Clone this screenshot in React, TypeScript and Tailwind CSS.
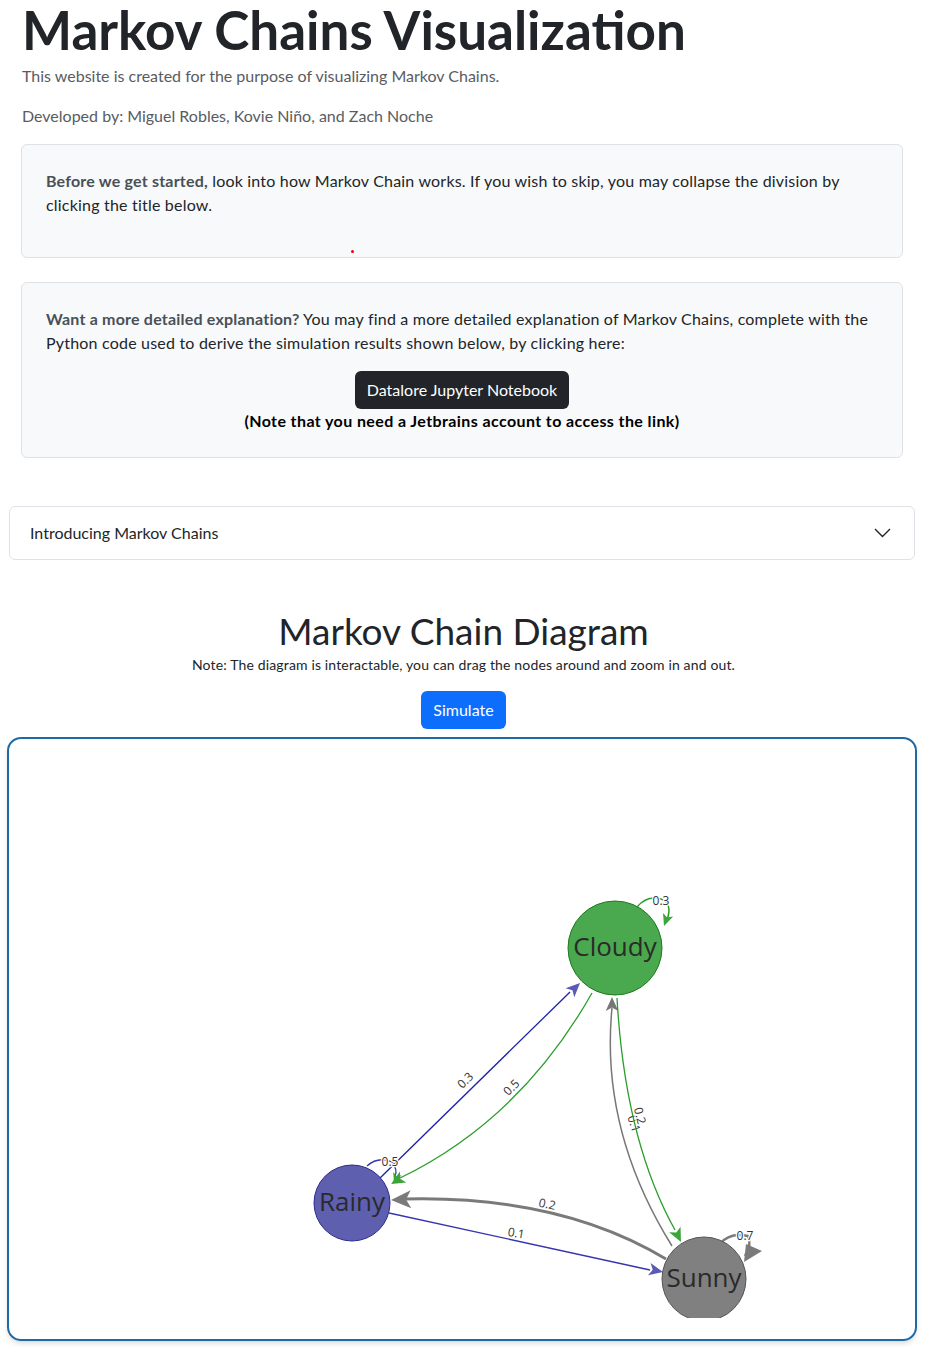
const font = { fontFamily: 'Lato, "Open Sans", sans-serif' };

function Arrow({ x, y, angle, color, size = 14 }: { x: number; y: number; angle: number; color: string; size?: number }) {
  // tip at (x, y), pointing along angle (degrees)
  const w = size * 0.45;
  return (
    <polygon
      points={`0,0 ${-size},${-w} ${-size * 0.75},0 ${-size},${w}`}
      fill={color}
      transform={`translate(${x} ${y}) rotate(${angle})`}
    />
  );
}

function Label({ x, y, angle = 0, text }: { x: number; y: number; angle?: number; text: string }) {
  return (
    <text
      x={0}
      y={0}
      transform={`translate(${x} ${y}) rotate(${angle})`}
      textAnchor="middle"
      dominantBaseline="middle"
      fontSize="12"
      fill="#333"
      stroke="#fff"
      strokeWidth="2.5"
      paintOrder="stroke"
      fontFamily='"Open Sans", sans-serif'
    >
      {text}
    </text>
  );
}

function Diagram() {
  return (
    <svg viewBox="9 739 906 579" className="block w-full h-[579px]">
      {/* Rainy -> Cloudy */}
      <line x1="378" y1="1180" x2="570" y2="992" stroke="#2020a8" strokeWidth="1.3" />
      <Arrow x={580} y={983} angle={-44} color="#5b5bb5" />
      <Label x={466} y={1081} angle={-44} text="0.3" />

      {/* Cloudy -> Rainy */}
      <path d="M592 993 Q 520 1120 400 1178" fill="none" stroke="#2a9d2a" strokeWidth="1.3" />
      <Arrow x={391} y={1184} angle={150} color="#3aa53a" />
      <Label x={512} y={1088} angle={-45} text="0.5" />

      {/* Sunny -> Cloudy */}
      <path d="M672 1246 Q 600 1130 612 1008" fill="none" stroke="#777" strokeWidth="1.5" />
      <Arrow x={612} y={997} angle={-90} color="#777" />
      <Label x={633} y={1124} angle={72} text="0.1" />

      {/* Cloudy -> Sunny */}
      <path d="M617 998 Q 625 1140 675 1230" fill="none" stroke="#2a9d2a" strokeWidth="1.3" />
      <Arrow x={681} y={1242} angle={64} color="#3aa53a" />
      <Label x={639} y={1116} angle={76} text="0.2" />

      {/* Sunny -> Rainy */}
      <path d="M666 1259 Q 560 1195 404 1199" fill="none" stroke="#7a7a7a" strokeWidth="3" />
      <Arrow x={391} y={1200} angle={178} color="#7a7a7a" size={20} />
      <Label x={547} y={1205} angle={12} text="0.2" />

      {/* Rainy -> Sunny */}
      <line x1="389" y1="1213" x2="650" y2="1270" stroke="#3535b0" strokeWidth="1.3" />
      <Arrow x={663} y={1272} angle={12} color="#5b5bb5" />
      <Label x={516} y={1234} angle={10} text="0.1" />

      {/* self loops */}
      <path d="M637 907 Q 648 894 664 900 Q 672 906 667 920" fill="none" stroke="#2a9d2a" strokeWidth="1.5" />
      <Arrow x={664} y={926} angle={110} color="#3aa53a" size={12} />
      <Label x={661} y={902} text="0.3" />

      <path d="M367 1166 Q 378 1156 392 1162 Q 398 1170 395 1176" fill="none" stroke="#3535b0" strokeWidth="1.3" />
      <Arrow x={394} y={1183} angle={110} color="#3aa53a" size={10} />
      <Label x={390} y={1163} text="0.5" />

      <path d="M721 1243 Q 730 1232 748 1236 Q 752 1245 745 1256" fill="none" stroke="#7a7a7a" strokeWidth="2.5" />
      <polygon points="746,1244 762,1251 744,1262" fill="#7a7a7a" />
      <Label x={745} y={1237} text="0.7" />

      {/* nodes */}
      <circle cx="615" cy="948" r="47" fill="#4aa84e" stroke="#1f7a1f" strokeWidth="1" />
      <text x="615" y="946" textAnchor="middle" dominantBaseline="central" fontSize="26" fill="#2a2a2a" fontFamily='"Open Sans", sans-serif'>
        Cloudy
      </text>

      <circle cx="352" cy="1203" r="38" fill="#5f5fb0" stroke="#2a2a8a" strokeWidth="1" />
      <text x="352" y="1201" textAnchor="middle" dominantBaseline="central" fontSize="26" fill="#2a2a2a" fontFamily='"Open Sans", sans-serif'>
        Rainy
      </text>

      <circle cx="704" cy="1279" r="42" fill="#808080" stroke="#555" strokeWidth="1" />
      <text x="704" y="1277" textAnchor="middle" dominantBaseline="central" fontSize="26" fill="#2a2a2a" fontFamily='"Open Sans", sans-serif'>
        Sunny
      </text>
    </svg>
  );
}

export default function App() {
  return (
    <div className="min-h-screen bg-white text-[#212529] pb-2" style={font}>
      {/* Header */}
      <div className="px-[22px]">
        <h1 className="text-[53px] leading-[60px] font-bold mb-1">Markov Chains Visualization</h1>
        <p className="text-base leading-6 text-[#595c5f] mb-4">This website is created for the purpose of visualizing Markov Chains.</p>
        <p className="text-base leading-6 text-[#595c5f] mb-4">Developed by: Miguel Robles, Kovie Niño, and Zach Noche</p>
      </div>

      {/* Intro card */}
      <div className="relative ml-[21px] w-[882px] border border-[#dee2e6] rounded-md bg-[#f8f9fa] px-6 pt-6 pb-6">
        <p className="text-base leading-6 mb-4 pr-8 tracking-[0.2px]">
          <span className="font-bold text-[#495057]">Before we get started,</span> look into how Markov Chain works. If you wish to skip, you may collapse the division by clicking the title below.
        </p>
        <span className="absolute left-[329px] bottom-[4px] w-[3px] h-[3px] rounded-full bg-red-600" />
      </div>

      {/* Notebook card */}
      <div className="ml-[21px] mt-6 w-[882px] border border-[#dee2e6] rounded-md bg-[#f8f9fa] px-6 pt-6 pb-6">
        <p className="text-base leading-6 mb-4 tracking-[0.2px]">
          <span className="font-bold text-[#495057]">Want a more detailed explanation?</span> You may find a more detailed explanation of Markov Chains, complete with the Python code used to derive the simulation results shown below, by clicking here:
        </p>
        <div className="flex flex-col items-center">
          <button className="h-[38px] px-3 rounded-md bg-[#212529] text-white text-base">Datalore Jupyter Notebook</button>
          <p className="text-base leading-6 font-bold text-black tracking-[0.4px]">(Note that you need a Jetbrains account to access the link)</p>
        </div>
      </div>

      {/* Accordion */}
      <div className="ml-[9px] mt-12 w-[906px] border border-[#dee2e6] rounded-md">
        <div className="h-[52px] flex items-center justify-between pl-5 pr-[23px]">
          <span className="text-base">Introducing Markov Chains</span>
          <svg width="17" height="10" viewBox="0 0 17 10" fill="none" stroke="#212529" strokeWidth="1.4">
            <path d="M1 1 L8.5 8.5 L16 1" />
          </svg>
        </div>
      </div>

      {/* Diagram section */}
      <div className="flex flex-col items-center mt-[49px]">
        <h2 className="text-[37px] leading-[44px] font-normal">Markov Chain Diagram</h2>
        <p className="text-[14px] leading-5 mt-[2px] tracking-[0.15px]">Note: The diagram is interactable, you can drag the nodes around and zoom in and out.</p>
        <button className="mt-4 h-[38px] px-3 rounded-md bg-[#0d6efd] text-white text-base">Simulate</button>
      </div>

      <div className="ml-[7px] mt-2 w-[910px] h-[604px] border-2 border-[#1f6aa5] rounded-[14px] shadow-md overflow-hidden">
        <Diagram />
      </div>
    </div>
  );
}
